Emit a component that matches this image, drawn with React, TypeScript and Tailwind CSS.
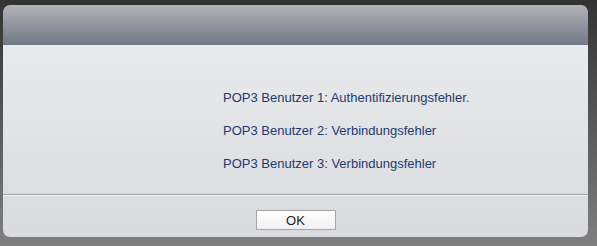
const lines = [
  "POP3 Benutzer 1: Authentifizierungsfehler.",
  "POP3 Benutzer 2: Verbindungsfehler",
  "POP3 Benutzer 3: Verbindungsfehler",
];

export default function App() {
  return (
    <div className="flex h-[246px] w-[597px] bg-gradient-to-b from-[#333333] to-[#808080] pt-[5px] pr-[9px] pb-[9px] pl-[3px] font-['Liberation_Sans',Arial,sans-serif]">
      <div className="flex flex-1 flex-col overflow-hidden rounded-[7px]">
        <div className="h-[40px] bg-gradient-to-b from-[#b2b3b7] to-[#737886]" />
        <div className="flex flex-1 flex-col bg-gradient-to-b from-[#e9eaec] to-[#d8dadd]">
          <div className="flex flex-col gap-[18px] pt-[45px] pb-[23px] pl-[220px] text-[13px] leading-[15px] text-[#1f3a70]">
            {lines.map((line, index) => (
              <div key={index}>{line}</div>
            ))}
          </div>
          <div className="h-px bg-[#9c9ea3]" />
          <div className="h-px bg-[#f4f5f6]" />
          <div className="flex flex-1 items-start justify-center pt-[14px]">
            <button className="h-[20px] w-[80px] border border-[#a5a5a5] bg-gradient-to-b from-[#ffffff] to-[#f0f0f0] text-[13px] leading-none text-[#1a1a1a]">
              OK
            </button>
          </div>
        </div>
      </div>
    </div>
  );
}
